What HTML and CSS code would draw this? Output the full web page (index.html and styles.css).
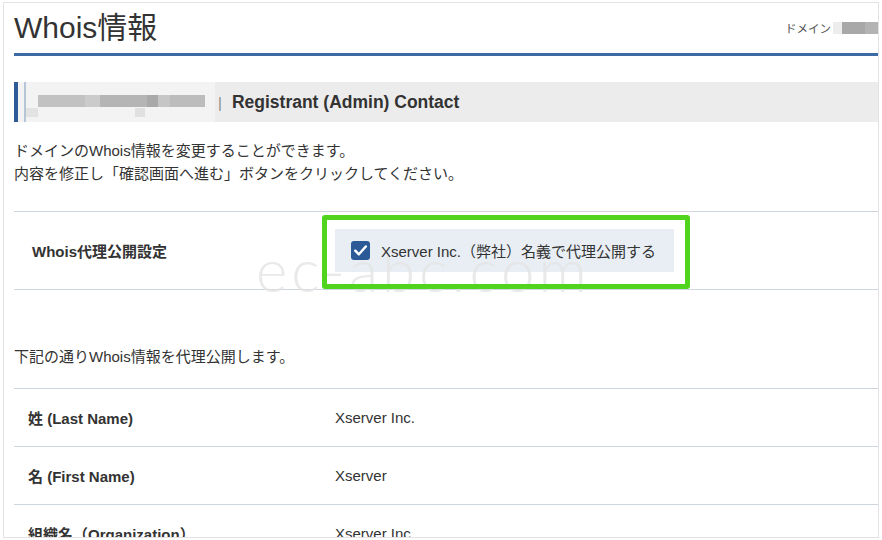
FILE: index.html
```html
<!DOCTYPE html>
<html lang="ja">
<head>
<meta charset="utf-8">
<title>Whois情報</title>
<link rel="stylesheet" href="styles.css">
</head>
<body>
<div class="frame">
  <div class="watermark">ec-abc.com</div>
  <header class="head">
    <h1 class="title">Whois情報</h1>
    <div class="domain"><span>ドメイン</span><span class="domain-mask"></span></div>
  </header>

  <div class="sec-head">
    <span class="sec-bar"></span>
    <span class="sec-redact"></span>
    <span class="sec-sep">|</span>
    <span class="sec-title">Registrant (Admin) Contact</span>
  </div>

  <p class="lead">ドメインのWhois情報を変更することができます。<br>内容を修正し「確認画面へ進む」ボタンをクリックしてください。</p>

  <div class="setting-row">
    <div class="label label-wide">Whois代理公開設定</div>
    <div class="value">
      <label class="check-box">
        <span class="check">
          <svg viewBox="0 0 20 20" width="19" height="19"><path d="M4.5 10.2 L8.3 14 L15.6 5.8" fill="none" stroke="#fff" stroke-width="2.6" stroke-linecap="round" stroke-linejoin="round"/></svg>
        </span>
        <span class="check-text">Xserver Inc.（弊社）名義で代理公開する</span>
      </label>
    </div>
  </div>

  <p class="note">下記の通りWhois情報を代理公開します。</p>

  <div class="data">
    <div class="drow"><div class="label">姓 (Last Name)</div><div class="value">Xserver Inc.</div></div>
    <div class="drow"><div class="label">名 (First Name)</div><div class="value">Xserver</div></div>
    <div class="drow"><div class="label">組織名（Organization）</div><div class="value">Xserver Inc.</div></div>
  </div>
</div>
</body>
</html>
```
FILE: styles.css
```css
* { box-sizing: border-box; }
html, body { margin: 0; background: #fff; }
body {
  font-family: "Liberation Sans", "Noto Sans CJK JP", sans-serif;
  color: #333;
}
.frame {
  position: relative;
  margin: 2px 3px;
  height: 536px;
  border: 1px solid #e3e3e3;
  overflow: hidden;
  padding-left: 10px;
}
.watermark {
  position: absolute;
  left: 252px;
  top: 234px;
  z-index: 1;
  font-family: "Lato", "Liberation Sans", sans-serif;
  font-weight: 300;
  font-size: 60px;
  line-height: 64px;
  letter-spacing: 4px;
  color: rgba(228, 228, 228, 0.8);
  pointer-events: none;
  white-space: nowrap;
}
.head {
  display: flex;
  justify-content: space-between;
  align-items: center;
  padding: 5px 0;
  border-bottom: 3px solid #3c6ba3;
}
.title {
  margin: 0;
  font-size: 30px;
  line-height: 40px;
  font-weight: 400;
  color: #333;
}
.domain {
  display: flex;
  align-items: center;
  gap: 2px;
  font-size: 11.5px;
  color: #555;
}
.domain-mask {
  width: 45px;
  height: 12px;
  background: linear-gradient(to right, #ededed 0 9px, #a8a8a8 9px 32px, #b3b3b3 32px);
}
.sec-head {
  display: flex;
  align-items: center;
  height: 40px;
  margin-top: 26px;
  background: #ececec;
}
.sec-bar {
  width: 4px;
  align-self: stretch;
  background: #2e5b95;
}
.sec-redact {
  width: 197px;
  align-self: stretch;
  background:
    linear-gradient(to right, transparent 0 6px, #b7c5d9 6px 8px, transparent 8px),
    linear-gradient(to right, transparent 0 20px, #c2c2c2 20px 67px, #cbcbcb 67px 82px, #b5b5b5 82px 129px, #a9a9a9 129px 140px, #c6c6c6 140px 152px, #bcbcbc 152px 187px, transparent 187px) 0 13px / 100% 12px no-repeat,
    linear-gradient(to right, transparent 0 8px, #e3e3e3 8px 20px, transparent 20px 117px, #e0e0e0 117px 127px, transparent 127px) 0 26px / 100% 9px no-repeat,
    #f3f3f3;
}
.sec-sep {
  margin-left: 3px;
  font-size: 15px;
  color: #8a8a8a;
}
.sec-title {
  margin-left: 10px;
  font-size: 17.5px;
  font-weight: 700;
  color: #333;
}
.lead {
  margin: 17px 0 0;
  font-size: 15px;
  line-height: 23px;
}
.setting-row {
  display: flex;
  align-items: center;
  min-height: 79px;
  margin-top: 26px;
  border-top: 1px solid #d0d6de;
  border-bottom: 1px solid #d0d6de;
}
.label {
  width: 321px;
  flex: none;
  padding-left: 14px;
  font-size: 15px;
  font-weight: 700;
  color: #333;
}
.label-wide { padding-left: 18px; }
.value {
  font-size: 15px;
  color: #333;
}
.check-box {
  position: relative;
  display: flex;
  align-items: center;
  width: 339px;
  height: 43px;
  padding-left: 16px;
  background: #e9eef5;
}
.check-box::after {
  content: "";
  position: absolute;
  z-index: 2;
  top: -14px;
  left: -13px;
  right: -16px;
  bottom: -17px;
  border: 5px solid #50d41d;
  border-radius: 3px;
}
.check {
  position: relative;
  z-index: 2;
  display: flex;
  width: 19px;
  height: 19px;
  border-radius: 3px;
  background: #2c5a97;
}
.check-text {
  position: relative;
  z-index: 2;
  margin-left: 11px;
  font-size: 15px;
  color: #333;
}
.note {
  margin: 55px 0 0;
  font-size: 15px;
  line-height: 23px;
}
.data { margin-top: 20px; }
.drow {
  display: flex;
  align-items: center;
  height: 58px;
  border-top: 1px solid #d0d6de;
}
```
